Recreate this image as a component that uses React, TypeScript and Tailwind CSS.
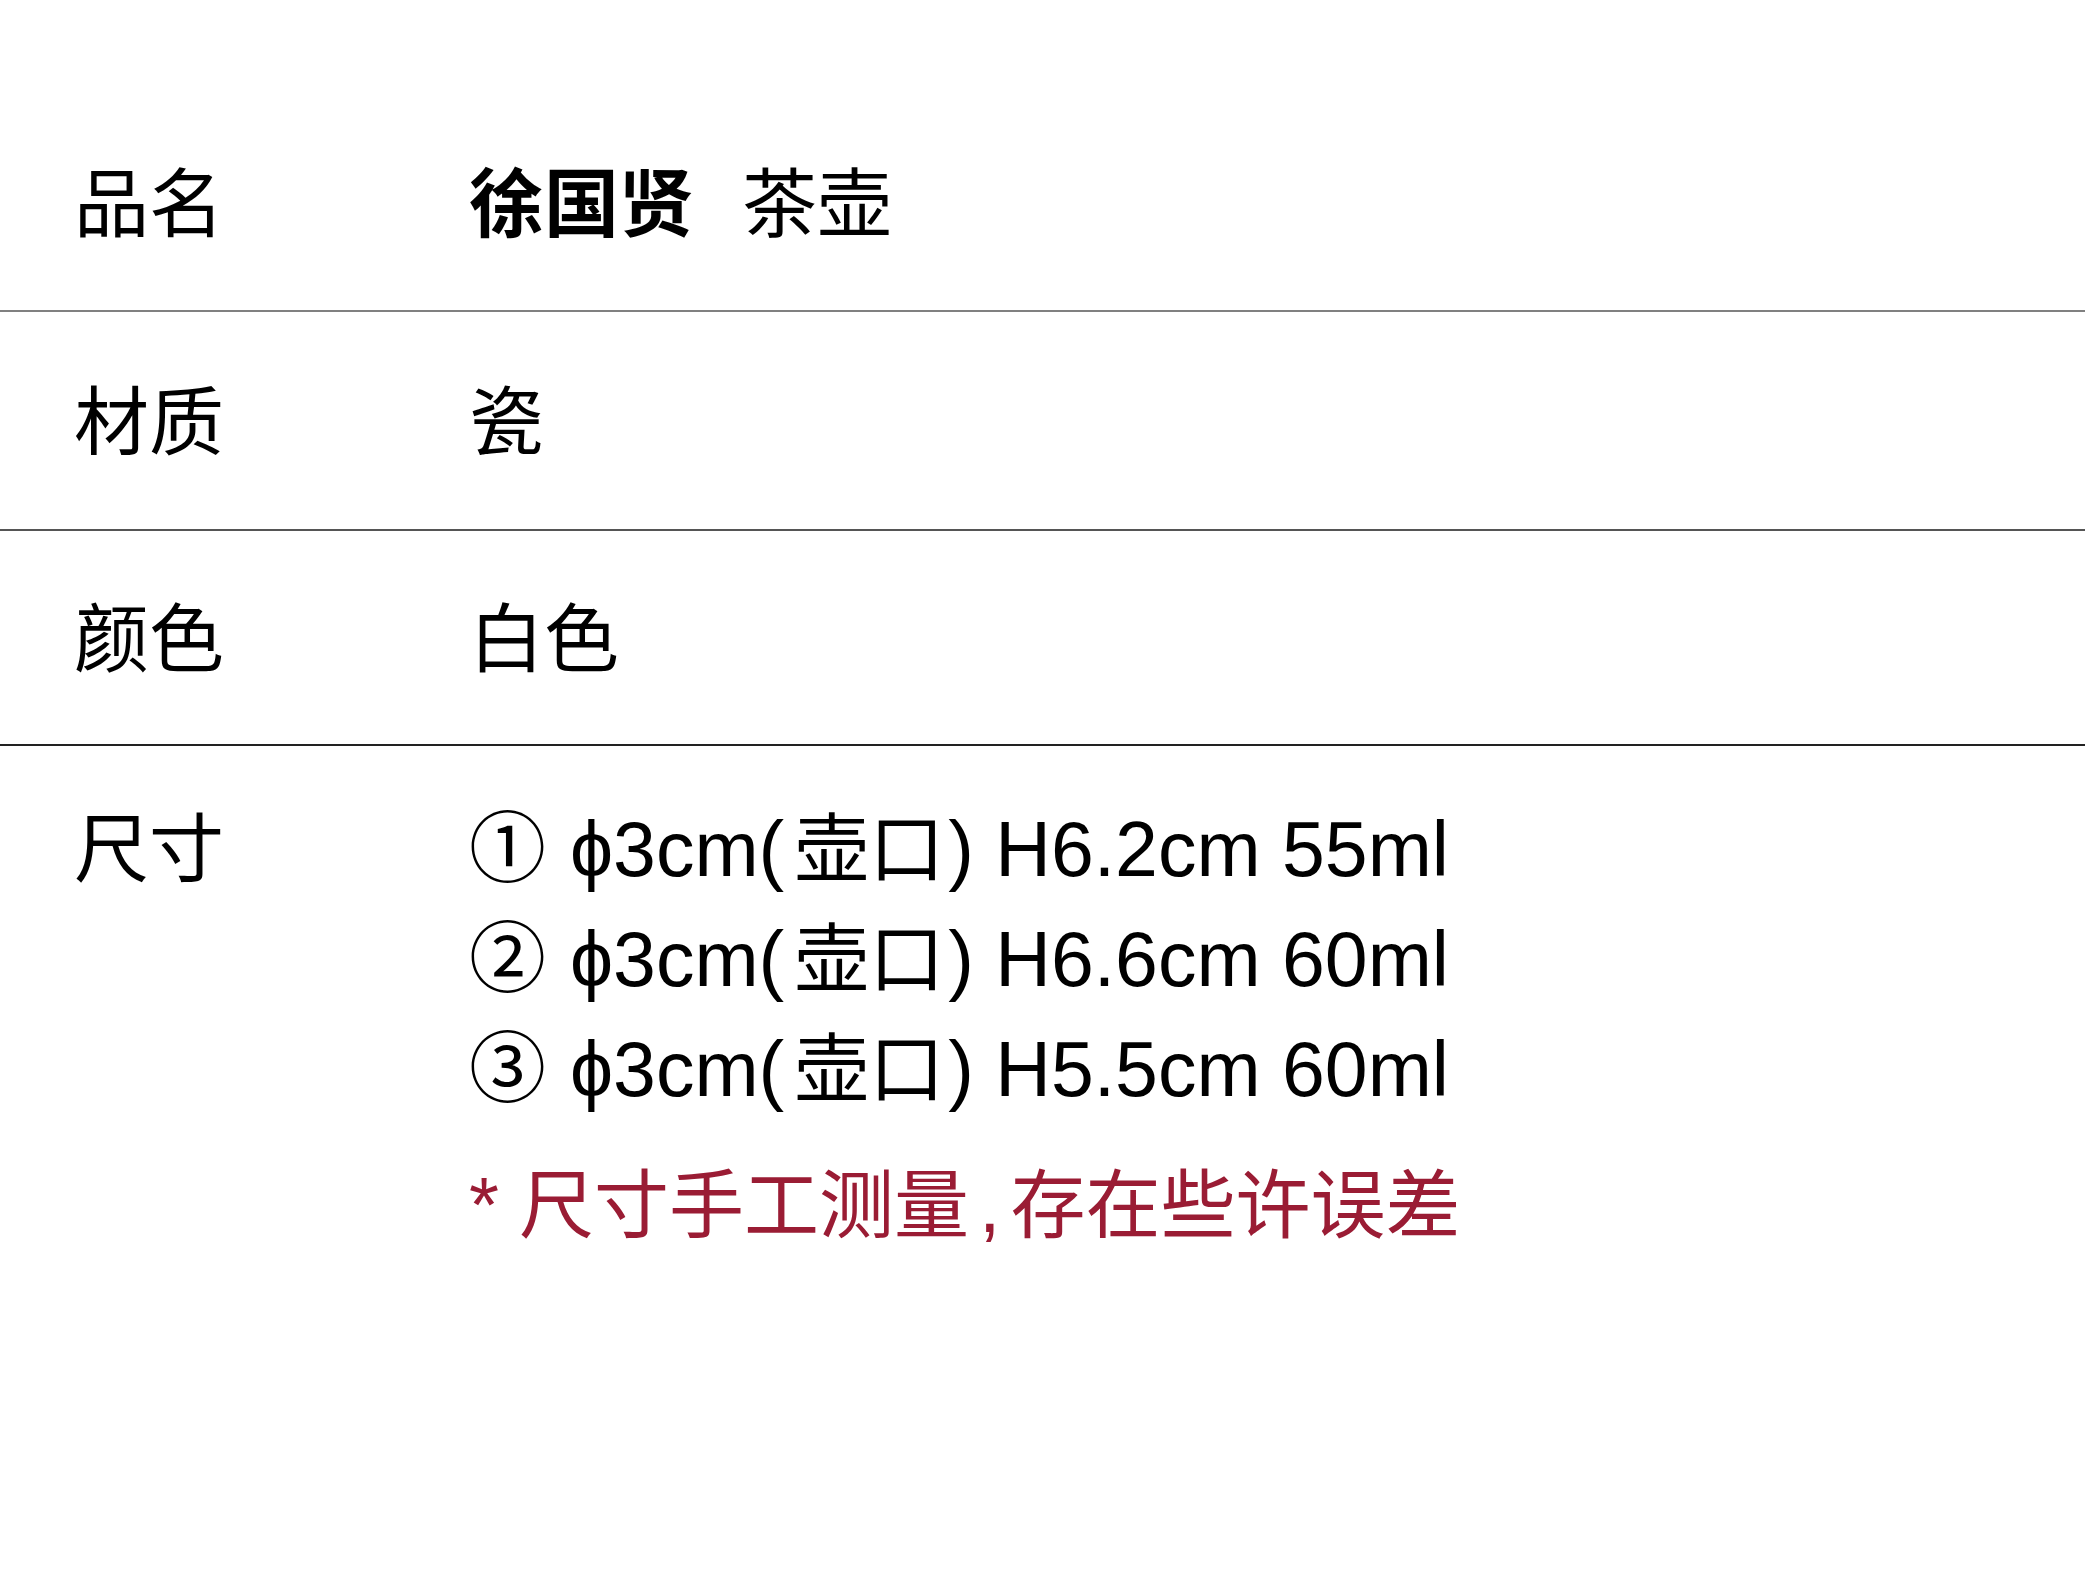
const CJK = "font-['Noto_Sans_CJK_SC',sans-serif]";
const LATIN = "font-['Liberation_Sans','Noto_Sans_CJK_SC',sans-serif]";

const SIZES = [
  { mark: '①', h: 'H6.2cm', ml: '55ml' },
  { mark: '②', h: 'H6.6cm', ml: '60ml' },
  { mark: '③', h: 'H5.5cm', ml: '60ml' },
];

function Row({
  label,
  children,
  className = '',
}: {
  label: string;
  children: React.ReactNode;
  className?: string;
}) {
  return (
    <div className={`flex items-center pb-[8px] ${className}`}>
      <div className="w-[469px] shrink-0 pl-[74px]">{label}</div>
      <div>{children}</div>
    </div>
  );
}

export default function App() {
  return (
    <div className={`min-h-[1584px] w-full bg-white pt-[94px] text-[75px] leading-none text-black ${CJK}`}>
      <Row label="品名" className="h-[218px] border-b-2 border-[#808080]">
        <span className="font-bold">徐国贤</span>
        <span className="ml-[48px]">茶壶</span>
      </Row>
      <Row label="材质" className="h-[219px] border-b-2 border-[#555555]">
        瓷
      </Row>
      <Row label="颜色" className="h-[215px] border-b-2 border-[#222222]">
        白色
      </Row>

      {/* size block */}
      <div className="flex pt-[43px]">
        <div className="w-[469px] shrink-0 pl-[74px] leading-[110px]">尺寸</div>
        <div>
          {SIZES.map((s) => (
            <div key={s.mark} className="leading-[110px] whitespace-pre">
              <span className="text-[77px] leading-none">{s.mark}</span>
              <span className={`${LATIN} ml-[24px] text-[77px] leading-none`}>ϕ3cm(</span>
              <span className="ml-[10px] leading-none">壶口</span>
              <span className={`${LATIN} ml-[4px] text-[77px] leading-none`}>) {s.h} {s.ml}</span>
            </div>
          ))}
          <div className="mt-[26px] leading-[110px] text-[#9a1c34]">
            <span className={`${LATIN} text-[77px] leading-none`}>*</span>
            <span className="ml-[20px] leading-none">尺寸手工测量</span>
            <span className={`${LATIN} mx-[10px] text-[77px] leading-none`}>,</span>
            <span className="leading-none">存在些许误差</span>
          </div>
        </div>
      </div>
    </div>
  );
}
